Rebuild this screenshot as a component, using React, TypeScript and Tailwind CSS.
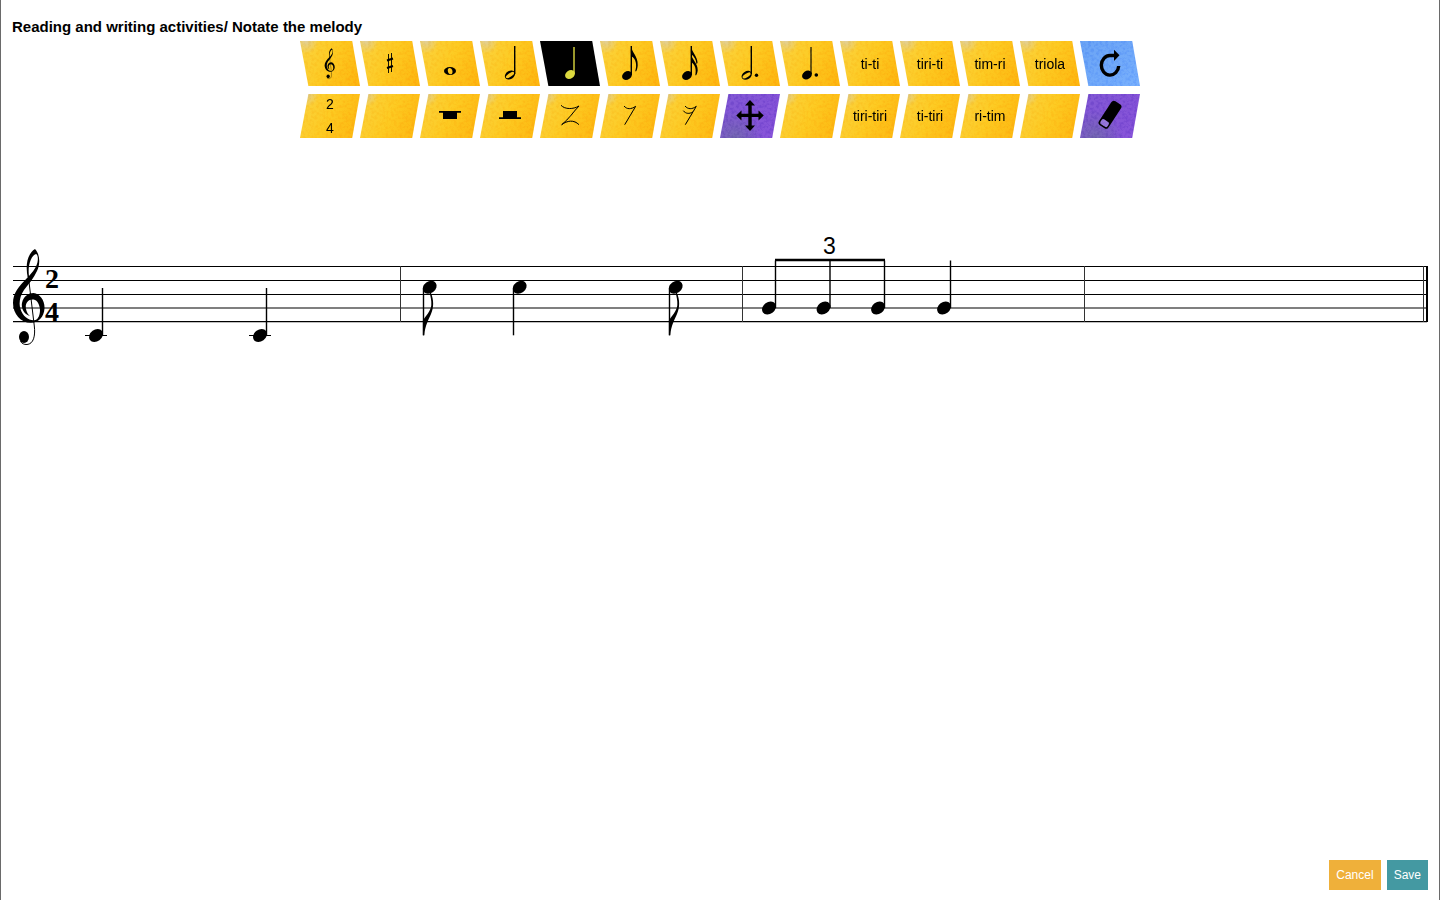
import type { ReactNode } from 'react'
import clsx from 'clsx'

type Tone = 'yellow' | 'black' | 'blue' | 'purple'

type Tool = {
  label: string
  tone?: Tone
  text?: string
  icon?: ReactNode
}

const tones: Record<Tone, string> = {
  yellow:
    'bg-[radial-gradient(circle_at_10%_0,#e2cf98,transparent_13px),linear-gradient(115deg,#fbd23c_10%,#fdcb22_50%,#fdb60e)]',
  black: 'bg-black',
  blue: 'bg-linear-to-br from-[#6ba4f5] to-[#78b0fd]',
  purple: 'bg-[radial-gradient(circle_at_25%_100%,#7668b4,transparent_28px),linear-gradient(115deg,#8259d4,#8853da)]',
}

function Clef() {
  return (
    <g>
      <path d="M28 279C25 266 27 254 35 249C40 254 40.5 264 37 271C34 278 28.500 284 24 290C20 296 18.500 303 20.500 309C23 317 30 321.500 35.500 320C39 318.500 40.500 313 39.800 308C38.800 302 36 299.500 32.500 299.500C27.500 299.500 25 304 26 309C26.700 312.500 28 314.500 30 316C24 314.500 21 308.500 22 303C23.500 296 28.500 293 33.500 293C40 293.500 45 301 44.500 308.500C44 317 38.500 322.500 31 322.800C21 323 13 314 13 303C13 293 19 286 27.500 277.500C33 272 37.500 266 37.800 260C38 257 37.500 254.500 36 254C31 255.500 27.500 266 29 276Z" />
      <path
        d="M28.300 276L34.300 326C35.500 336 33.500 344 27 344.500C24 344.700 22 343.500 20.500 341.500"
        fill="none"
        stroke="currentColor"
        strokeWidth="1"
      />
      <ellipse cx="24" cy="337" rx="5" ry="6" />
    </g>
  )
}

function Head({ x, y, rx = 5.3, ry = 4.1 }: { x: number; y: number; rx?: number; ry?: number }) {
  return <ellipse cx={x} cy={y} rx={rx} ry={ry} transform={`rotate(-36 ${x} ${y})`} />
}

function HollowHead({ x, y }: { x: number; y: number }) {
  return (
    <g transform={`rotate(-32 ${x} ${y})`}>
      <path
        fillRule="evenodd"
        d={`M${x - 5.5} ${y}a5.500 4 0 1 0 11 0a5.500 4 0 1 0 -11 0ZM${x - 4.8} ${y}a4.800 1.900 0 1 0 9.600 0a4.800 1.900 0 1 0 -9.600 0Z`}
      />
    </g>
  )
}

function Stem({ x, from, to, width = 1.4 }: { x: number; from: number; to: number; width?: number }) {
  return <path d={`M${x} ${from}V${to}`} stroke="currentColor" strokeWidth={width} />
}

const rest = { fill: 'none', stroke: 'currentColor', strokeWidth: 1 }

const topRow: Tool[] = [
  {
    label: 'Treble clef',
    icon: (
      <g transform="translate(20.500 -72.500) scale(.32)">
        <Clef />
      </g>
    ),
  },
  {
    label: 'Sharp',
    icon: (
      <g stroke="currentColor">
        <path d="M28.500 13V32M31.500 12V31" strokeWidth="0.900" />
        <path d="M27 19.500L33 17.500M27 27L33 25" strokeWidth="2" />
      </g>
    ),
  },
  {
    label: 'Whole note',
    icon: (
      <path
        fillRule="evenodd"
        d="M24 30a6 4 0 1 0 12 0a6 4 0 1 0 -12 0ZM28 28C29 26.300 31.300 26.800 32.200 29C33 31.300 32.300 33.200 30.800 33.300C28.600 33.400 27.200 30 28 28Z"
      />
    ),
  },
  { label: 'Half note', icon: <><HollowHead x={30} y={34} /><Stem x={34.7} from={5} to={33} /></> },
  { label: 'Quarter note', tone: 'black', icon: <><Head x={30} y={33.5} /><Stem x={34} from={6} to={33} /></> },
  {
    label: 'Eighth note',
    icon: (
      <>
        <Head x={27} y={34.5} />
        <Stem x={31.3} from={5} to={34} />
        <path d="M31 5C32 12 38 15 37.700 24C37.600 27 37 29 36 30.500L35.300 30C37 25 36.500 17.500 31 15Z" />
      </>
    ),
  },
  {
    label: 'Sixteenth note',
    icon: (
      <>
        <Head x={27} y={34.5} />
        <Stem x={31.3} from={5} to={34} />
        <path d="M31 5C32 12 37.500 15 37.500 22L36.500 23C36 18 34 15 31 13Z" />
        <path d="M31 13C32 19 37.800 22 37.700 29C37.600 31 37 33 36 34.500L35.300 34C36.500 29 35.500 23.500 31 21Z" />
      </>
    ),
  },
  {
    label: 'Dotted half note',
    icon: <><HollowHead x={26.7} y={34.3} /><Stem x={31.3} from={5} to={33} /><circle cx="36.500" cy="34.300" r="1.700" /></>,
  },
  {
    label: 'Dotted quarter note',
    icon: <><Head x={27} y={34} /><Stem x={31} from={6} to={33} width={1.1} /><circle cx="36.300" cy="34" r="1.800" /></>,
  },
  { label: 'ti-ti', text: 'ti-ti' },
  { label: 'tiri-ti', text: 'tiri-ti' },
  { label: 'tim-ri', text: 'tim-ri' },
  { label: 'triola', text: 'triola' },
  {
    label: 'Start over',
    tone: 'blue',
    icon: (
      <>
        <path d="M35 14.500H30A8.700 9.800 0 1 0 38.700 25" fill="none" stroke="currentColor" strokeWidth="3.400" />
        <path d="M34 8.800L39.500 14.200L34 20Z" />
      </>
    ),
  },
]

const bottomRow: Tool[] = [
  { label: 'Time signature 2/4', text: '2\n4' },
  { label: 'Empty tool' },
  { label: 'Whole rest', icon: <path d="M19 17H41V18.800H37V25H23V18.800H19Z" /> },
  { label: 'Half rest', icon: <path d="M23 17H37V23.200H41V25H19V23.200H23Z" /> },
  {
    label: 'Quarter rest',
    icon: <path {...rest} d="M21 11.300C25 15.500 33 15.500 39 12C34 17 29 25 21.700 30.700C27 26.500 34 25.500 39 30.700" />,
  },
  { label: 'Eighth rest', icon: <path {...rest} d="M24 12C27 15.500 31 15.500 35.700 12.300L24.700 30.700" /> },
  {
    label: 'Sixteenth rest',
    icon: <path {...rest} d="M25 12C28 15.500 32 15.500 36.300 12.300L25.300 30.700M23.300 16.700C26 20 29 20 33 18" />,
  },
  {
    label: 'Move',
    tone: 'purple',
    icon: (
      <path d="M30 6L35 11.500H31.700V19.700H38.500V16.500L43.700 21.400L38.500 26.400V23.100H31.700V31.500H35L30 37L25 31.500H28.300V23.100H21.500V26.400L16.300 21.400L21.500 16.500V19.700H28.300V11.500H25Z" />
    ),
  },
  { label: 'Empty tool' },
  { label: 'tiri-tiri', text: 'tiri-tiri' },
  { label: 'ti-tiri', text: 'ti-tiri' },
  { label: 'ri-tim', text: 'ri-tim' },
  { label: 'Empty tool' },
  {
    label: 'Eraser',
    tone: 'purple',
    icon: (
      <g transform="rotate(33 30 20.700)">
        <rect x="24.300" y="6.500" width="11.400" height="28.500" rx="3" />
        <rect x="25.800" y="27.800" width="8.400" height="5.700" rx="1.800" fill="#9a7bdc" />
      </g>
    ),
  },
]

function ToolTile({ tool, down }: { tool: Tool; down?: boolean }) {
  const tone = tool.tone ?? 'yellow'
  return (
    <button
      type="button"
      aria-label={tool.label}
      aria-pressed={tone === 'black'}
      className={clsx(
        'grid w-15 place-items-center *:col-start-1 *:row-start-1',
        down
          ? 'h-11 [clip-path:polygon(14%_0,100%_0,87%_100%,0_100%)]'
          : 'h-[45px] [clip-path:polygon(0_0,87%_0,100%_100%,14%_100%)]',
        tones[tone],
        tone === 'black' ? 'text-[#dcd93f]' : 'text-black'
      )}
    >
      {tone !== 'black' && (
        <svg className="h-full w-full opacity-25 mix-blend-soft-light" aria-hidden="true">
          <rect width="100%" height="100%" filter="url(#paper)" />
        </svg>
      )}
      {tool.icon && (
        <svg viewBox="0 0 60 45" className="h-[45px] w-15 self-start" fill="currentColor" aria-hidden="true">
          {tool.icon}
        </svg>
      )}
      {tool.text && <span className="-my-2 whitespace-pre text-sm leading-6">{tool.text}</span>}
    </button>
  )
}

const lines = [266.5, 280.5, 294.5, 308, 321.7]

function NoteUp({ x, y, ledger }: { x: number; y: number; ledger?: boolean }) {
  return (
    <g>
      <Head x={x} y={y} rx={7.5} ry={5.8} />
      <Stem x={x + 6.5} from={y - 47.5} to={y} />
      {ledger && <path d={`M${x - 11} ${y}H${x + 11}`} stroke="currentColor" />}
    </g>
  )
}

function NoteDown({ x, y, flag }: { x: number; y: number; flag?: boolean }) {
  return (
    <g>
      <Head x={x} y={y} rx={7.5} ry={5.8} />
      <Stem x={x - 6.2} from={y + 1} to={y + 48} />
      {flag && (
        <path
          transform={`translate(${x} ${y})`}
          d="M1.200 5.500C4.200 13 4.200 20 1.200 27C-1 32 -4.500 38 -5.500 48H-6.800V33C-4 29 1 24 1.600 18C1.900 13 1 10 0 6Z"
        />
      )}
    </g>
  )
}

function Staff() {
  return (
    <svg viewBox="12 230 1416 120" className="w-full" fill="currentColor" role="img" aria-label="Melody in 2/4">
      {lines.map((y) => (
        <path key={y} d={`M13 ${y}H1427`} stroke="currentColor" strokeWidth="1.200" />
      ))}
      {[400.5, 742.5, 1084.5, 1423.5].map((x) => (
        <path key={x} d={`M${x} 266V322`} stroke="#333" />
      ))}
      <path d="M1427 266V322" stroke="currentColor" strokeWidth="2" />

      <Clef />
      <g className="font-['Liberation_Serif',serif] text-[28px] font-bold" textAnchor="middle">
        <text x="52" y="288">2</text>
        <text x="52" y="321">4</text>
      </g>

      <NoteUp x={96} y={335.5} ledger />
      <NoteUp x={260} y={335.5} ledger />

      <NoteDown x={429.7} y={287.3} flag />
      <NoteDown x={519.7} y={287.3} />
      <NoteDown x={675.7} y={287.3} flag />

      {/* triplet */}
      <NoteUp x={769} y={308} />
      <NoteUp x={823.5} y={308} />
      <NoteUp x={878} y={308} />
      <path d="M775 260H885" stroke="currentColor" strokeWidth="2.600" />
      <text x="829.500" y="254" textAnchor="middle" className="text-[23px]">3</text>

      <NoteUp x={944} y={308} />
    </svg>
  )
}

export default function App() {
  return (
    <div className="flex min-h-screen flex-col border-x border-[#6a6a6a] bg-white px-[11px] font-['Liberation_Sans',Arial,sans-serif] text-black">
      {/* grain shared by the paper tiles */}
      <svg width="0" height="0" className="absolute" aria-hidden="true">
        <filter id="paper">
          <feTurbulence type="fractalNoise" baseFrequency="0.35" numOctaves="3" seed="4" />
          <feColorMatrix values="0 0 0 0 0  0 0 0 0 0  0 0 0 0 0  3 0 0 0 -1.200" />
        </filter>
      </svg>

      <h1 className="pt-[15px] text-[15px] leading-6 font-bold">Reading and writing activities/ Notate the melody</h1>

      <div role="toolbar" aria-label="Notation tools" className="flex flex-col items-center gap-2 pt-0.5">
        <div className="flex">
          {topRow.map((tool, i) => (
            <ToolTile key={i} tool={tool} />
          ))}
        </div>
        <div className="flex">
          {bottomRow.map((tool, i) => (
            <ToolTile key={i} tool={tool} down />
          ))}
        </div>
      </div>

      <main className="flex-1 pt-23">
        <Staff />
      </main>

      <footer className="flex justify-end gap-1.5 pb-2.5 text-xs text-white">
        <button type="button" className="h-[30px] bg-[#efb03a] px-[7px]">Cancel</button>
        <button type="button" className="h-[30px] bg-[#4499a2] px-[7px]">Save</button>
      </footer>
    </div>
  )
}
